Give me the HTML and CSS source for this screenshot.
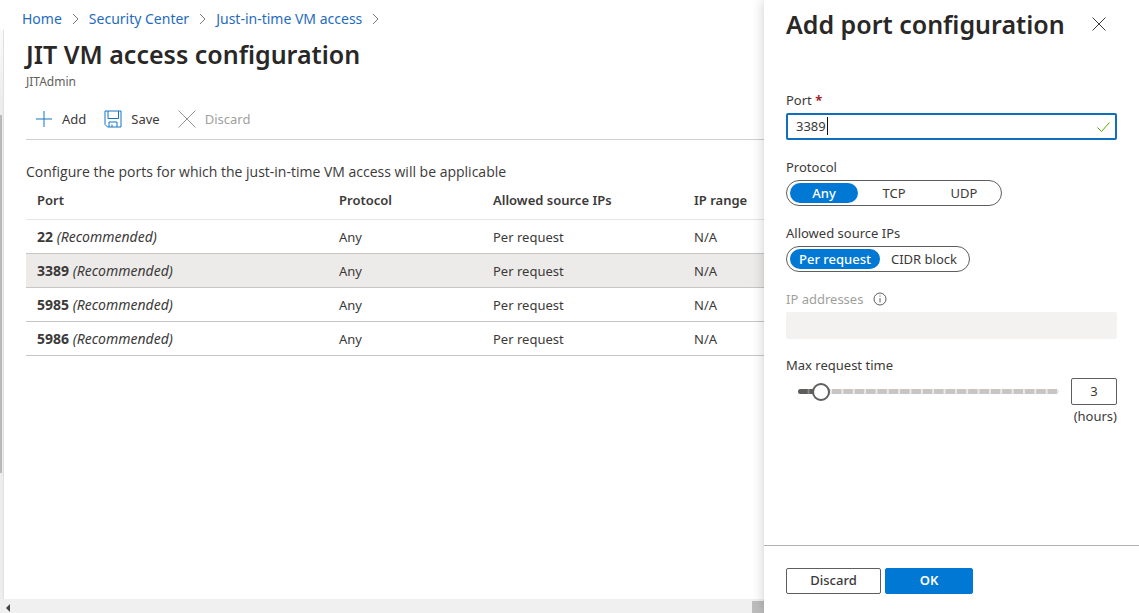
FILE: index.html
```html
<!DOCTYPE html>
<html lang="en">
<head>
<meta charset="utf-8">
<title>JIT VM access configuration</title>
<link rel="stylesheet" href="styles.css">
</head>
<body>
<div class="portal">
  <div class="workspace">
    <nav class="breadcrumb" aria-label="Breadcrumb">
      <a href="#">Home</a>
      <svg class="chevron" viewBox="0 0 7 12" aria-hidden="true"><path d="M1 1l5 5-5 5"/></svg>
      <a href="#">Security Center</a>
      <svg class="chevron" viewBox="0 0 7 12" aria-hidden="true"><path d="M1 1l5 5-5 5"/></svg>
      <a href="#">Just-in-time VM access</a>
      <svg class="chevron" viewBox="0 0 7 12" aria-hidden="true"><path d="M1 1l5 5-5 5"/></svg>
    </nav>
    <div class="stage">
      <div class="side-scroll"><div class="side-thumb"></div></div>
      <main class="blade">
        <div class="blade-body">
          <h1>JIT VM access configuration</h1>
          <p class="subtitle">JITAdmin</p>
          <div class="toolbar">
            <button type="button"><svg class="tool-icon blue" viewBox="0 0 18 18" aria-hidden="true"><path d="M9 1v16M1 9h16"/></svg>Add</button>
            <button type="button"><svg class="tool-icon blue" viewBox="0 0 18 18" aria-hidden="true"><path d="M1 1h16v16H3.500L1 14.500zM4 1v7.500h10.500V1M5 17v-5h8v5M8 17v-2.500"/></svg>Save</button>
            <button type="button" disabled><svg class="tool-icon grey" viewBox="0 0 18 18" aria-hidden="true"><path d="M.5.5l17 17M17.500.5l-17 17"/></svg>Discard</button>
          </div>
          <p class="intro">Configure the ports for which the just-in-time VM access will be applicable</p>
          <table class="ports">
            <colgroup><col class="c-port"><col class="c-protocol"><col class="c-source"><col class="c-range"></colgroup>
            <thead>
              <tr><th scope="col">Port</th><th scope="col">Protocol</th><th scope="col">Allowed source IPs</th><th scope="col">IP range</th></tr>
            </thead>
            <tbody>
              <tr><td><b>22</b> <i>(Recommended)</i></td><td>Any</td><td>Per request</td><td>N/A</td></tr>
              <tr class="selected"><td><b>3389</b> <i>(Recommended)</i></td><td>Any</td><td>Per request</td><td>N/A</td></tr>
              <tr><td><b>5985</b> <i>(Recommended)</i></td><td>Any</td><td>Per request</td><td>N/A</td></tr>
              <tr><td><b>5986</b> <i>(Recommended)</i></td><td>Any</td><td>Per request</td><td>N/A</td></tr>
            </tbody>
          </table>
        </div>
      </main>
    </div>
    <div class="bottom-scroll">
      <svg class="arrow" viewBox="0 0 4 8" aria-hidden="true"><path d="M4 0v8L0 4z"/></svg>
      <div class="bottom-thumb"></div>
    </div>
  </div>

  <form class="panel">
    <header class="panel-head">
      <h2>Add port configuration</h2>
      <button type="button" class="close" aria-label="Close"><svg viewBox="0 0 14 14" aria-hidden="true"><path d="M.5.5l13 13M13.500.5l-13 13"/></svg></button>
    </header>
    <div class="fields">
      <div class="field">
        <label for="port">Port <span class="required">*</span></label>
        <div class="text-box">
          <input id="port" type="text" value="3389">
          <span class="caret"></span>
          <svg class="tick" viewBox="0 0 13 10" aria-hidden="true"><path d="M.5 5.500l4 4 8-9"/></svg>
        </div>
      </div>
      <fieldset class="field">
        <legend>Protocol</legend>
        <div class="pills even">
          <label><input type="radio" name="protocol" checked><span>Any</span></label>
          <label><input type="radio" name="protocol"><span>TCP</span></label>
          <label><input type="radio" name="protocol"><span>UDP</span></label>
        </div>
      </fieldset>
      <fieldset class="field">
        <legend>Allowed source IPs</legend>
        <div class="pills">
          <label><input type="radio" name="source" checked><span>Per request</span></label>
          <label><input type="radio" name="source"><span>CIDR block</span></label>
        </div>
      </fieldset>
      <div class="field">
        <label for="addresses" class="muted">IP addresses
          <svg class="info" viewBox="0 0 14 14" aria-hidden="true"><circle cx="7" cy="7" r="6"/><path d="M7 6v4.500M7 3.500v1.200"/></svg>
        </label>
        <input id="addresses" class="disabled-box" type="text" disabled>
      </div>
      <div class="field">
        <label for="time">Max request time</label>
        <div class="time-row">
          <div class="slider">
            <div class="track"><div class="fill" style="width: 8.7%"></div></div>
            <input id="time" type="range" min="1" max="24" value="3">
          </div>
          <input class="hours" type="text" value="3" aria-label="Hours">
        </div>
        <div class="unit">(hours)</div>
      </div>
    </div>
    <footer class="actions">
      <button type="button">Discard</button>
      <button type="submit" class="primary">OK</button>
    </footer>
  </form>
</div>
</body>
</html>
```
FILE: styles.css
```css
* { box-sizing: border-box; }
body { margin: 0; font: 13px/20px "Noto Sans", "Open Sans", sans-serif; color: #3b3a39; background: #fff; }
h1, h2, p, fieldset { margin: 0; }
button, input { font: inherit; color: inherit; }
svg { display: block; fill: none; stroke: currentColor; flex: none; }

.portal { display: flex; height: 100vh; overflow: hidden; }
.workspace { flex: 1; min-width: 0; display: flex; flex-direction: column; }

.breadcrumb { display: flex; align-items: center; gap: 10px; height: 30px; padding: 8px 22px 0; font-size: 14px; white-space: nowrap; }
.breadcrumb a { color: #1f6cbd; text-decoration: none; }
.chevron { width: 7px; height: 12px; color: #777; }

.stage { flex: 1; min-height: 0; display: flex; }
.side-scroll { width: 4px; padding-top: 85px; background: linear-gradient(#fafafa, #ededed 70px); border-right: 1px solid #e0e0e0; }
.side-thumb { width: 2px; height: 358px; background: #b8b8b8; }
.blade { flex: 1; min-width: 0; overflow: hidden; }
.blade-body { min-width: 840px; padding: 8px 22px; }
h1, h2 { font-size: 25px; line-height: 32px; font-weight: 600; color: #292827; white-space: nowrap; }
.subtitle { font-size: 12px; line-height: 24px; color: #605e5c; }

.toolbar { display: flex; gap: 18px; height: 46px; padding: 4px 9px 0; border-bottom: 1px solid #d2d0ce; align-items: center; }
.toolbar button { display: flex; align-items: center; gap: 9px; padding: 0; border: 0; background: none; }
.toolbar button:disabled { color: #a19f9d; }
.tool-icon { width: 18px; height: 18px; }
.tool-icon.blue { color: #1374c5; }
.tool-icon.grey { color: #979593; }
.intro { margin-top: 22px; font-family: "Open Sans", "Noto Sans", sans-serif; font-size: 14px; }

.ports { width: 100%; table-layout: fixed; border-collapse: collapse; text-align: left; }
.c-port { width: 302px; }
.c-protocol { width: 154px; }
.c-source { width: 201px; }
.ports th, .ports td { height: 34px; padding: 1px 11px 0; border-bottom: 1px solid #c8c6c4; }
.ports th { height: 37px; padding: 0 11px 1px; font-weight: 600; border-color: #e8e6e4; }
.ports td:first-child { font-size: 14px; }
.ports b { font-weight: 700; }
.selected { background: #edebe9; }

.bottom-scroll { display: flex; align-items: flex-end; justify-content: space-between; height: 14px; padding-left: 6px; background: #f0f0f0; }
.arrow { width: 4px; height: 8px; margin-bottom: 1px; fill: #444; stroke: none; }
.bottom-thumb { width: 12px; height: 12px; background: #bdbdbd; }

.panel { position: relative; width: 375px; flex: none; display: flex; flex-direction: column; background: #fff; box-shadow: 0 0 12px rgba(0, 0, 0, .2); }
.panel-head { display: flex; align-items: center; justify-content: space-between; height: 48px; padding: 0 33px 0 22px; }
.close { padding: 0; border: 0; background: none; }
.close svg { width: 14px; height: 14px; }

.fields { flex: 1; padding: 42px 22px 0; }
.field { display: block; min-width: 0; padding: 0; border: 0; margin-bottom: 17px; }
.field > label, legend { display: block; width: 100%; padding: 0; line-height: 20px; margin-bottom: 3px; }
.field > .muted { display: flex; align-items: center; gap: 10px; color: #a19f9d; }
.field:last-child { margin-top: -1px; }
.required { color: #a4262c; font-weight: 700; }
.text-box { position: relative; display: flex; align-items: center; height: 27px; padding: 0 5px 0 8px; border: 2px solid #106ebe; border-radius: 2px; }
.text-box input { flex: 1; min-width: 0; padding: 0 0 1px; border: 0; outline: 0; background: none; }
.caret { position: absolute; left: 39px; top: 2px; width: 1px; height: 18px; background: #111; }
.tick { width: 13px; height: 10px; color: #57a300; }

.pills { display: inline-flex; gap: 2px; height: 26px; padding: 2px 3px; border: 1px solid #605e5c; border-radius: 13px; vertical-align: top; }
.pills label { position: relative; display: flex; }
.pills input { position: absolute; inset: 0; margin: 0; opacity: 0; }
.pills span { display: block; padding: 0 9px; line-height: 20px; border-radius: 10px; text-align: center; }
.pills.even span { width: 68px; }
.pills :checked + span { background: #0078d4; color: #fff; font-weight: 500; }

.info { width: 14px; height: 14px; color: #605e5c; }
.disabled-box { display: block; width: 100%; height: 27px; border: 0; border-radius: 2px; background: #f3f2f1; }

.time-row { display: flex; align-items: center; gap: 3px; padding-left: 3px; }
.slider { flex: 1; display: grid; align-items: center; }
.track, .slider input { grid-area: 1 / 1; }
.track { height: 5px; margin: 0 9px; border-radius: 3px; overflow: hidden; background: linear-gradient(90deg, #c8c6c4 calc(100% - 2px), #eceae9 0) 0 / calc(100% / 23) 100%; }
.fill { height: 5px; background: linear-gradient(90deg, #605e5c calc(100% - 2px), #8a8886 0) 0 / 50% 100%; }
.slider input { -webkit-appearance: none; appearance: none; width: 100%; height: 18px; margin: 0; background: none; }
.slider input::-webkit-slider-thumb { -webkit-appearance: none; width: 18px; height: 18px; border: 2px solid #605e5c; border-radius: 50%; background: #fff; }
.hours { width: 46px; height: 27px; padding: 0 0 1px; border: 1px solid #605e5c; border-radius: 2px; text-align: center; }
.unit { margin-top: 1px; text-align: right; }

.actions { display: flex; gap: 4px; height: 68px; padding: 22px 22px 0; border-top: 1px solid #b3b0ad; }
.actions button { width: 95px; height: 26px; padding: 0 0 2px; line-height: 20px; border: 1px solid #605e5c; border-radius: 2px; background: #fff; font-weight: 500; }
.actions .primary { width: 88px; border-color: #0078d4; background: #0078d4; color: #fff; font-weight: 600; }
```
